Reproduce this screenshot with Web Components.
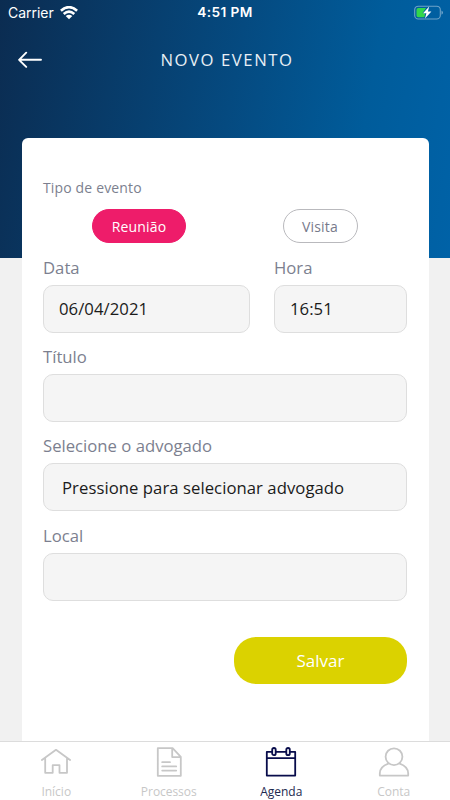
<!DOCTYPE html>
<html lang="pt-BR">
<head>
<meta charset="utf-8">
<title>Novo evento</title>
<style>
html, body { margin: 0; height: 100%; }
body { background: #f1f1f1; overflow: hidden; font-family: "Open Sans", "Noto Sans", sans-serif; }
</style>
</head>
<body>
<event-screen></event-screen>
<script>
const define = (name, html) => customElements.define(name, class extends HTMLElement {
  constructor() {
    super();
    const t = document.createElement('template');
    t.innerHTML = html;
    this.attachShadow({ mode: 'open' }).append(t.content.cloneNode(true));
  }
});

define('status-bar', `
<style>
:host { display: grid; grid-template-columns: 1fr auto 1fr; align-items: center; height: 25px; box-sizing: border-box; padding: 0 7px 0 8px; color: #fff; font: 400 14px/25px Inter, sans-serif; }
.left { display: flex; align-items: center; gap: 6px; letter-spacing: -.02px; }
.time { font-weight: 600; font-size: 13.7px; letter-spacing: .4px; margin-right: 1px; }
.battery { justify-self: end; margin-top: -1px; }
svg { display: block; }
</style>
<div class="left"><span>Carrier</span>
<svg width="18" height="14" viewBox="0 0 18 14" fill="none" stroke="#fff" stroke-width="2.6"><path d="M.9 4.7Q9-2.4 17.1 4.7M3.7 7.9Q9 3.3 14.3 7.9"/><path d="M9 13.2 5.7 10Q9 7.7 12.3 10Z" fill="#fff" stroke="none"/></svg></div>
<span class="time">4:51 PM</span>
<svg class="battery" width="29" height="15" viewBox="0 0 29 15"><rect x=".7" y="1.2" width="25.6" height="12.8" rx="3.6" fill="none" stroke="#fff" stroke-opacity=".43" stroke-width="1.1"/><path d="M27.5 5.4Q29 6.2 29 7.6T27.5 9.8Z" fill="#fff" opacity=".45"/><path d="M4.3 3H12L8.5 8.2H11.2L10.4 12.2H4.3Q2.5 12.2 2.5 10.4V4.8Q2.5 3 4.3 3Z" fill="#32d74b"/><path d="M15.2 1.4 9 8.2H12.4L11 13.6 17.4 6.6H13.9Z" fill="#fff"/></svg>`);

define('screen-header', `
<style>
:host { display: grid; grid-template-columns: 60px 1fr 60px; align-items: center; height: 69px; color: #fff; }
svg { display: block; margin-left: 18px; }
h1 { margin: 0; text-align: center; font: 400 16.7px/24px "Open Sans", sans-serif; letter-spacing: 1.55px; text-indent: 4px; white-space: nowrap; color: #e9eff5; }
</style>
<svg width="25" height="18" viewBox="0 0 25 18" fill="none" stroke="#fff" stroke-width="1.9" stroke-linecap="round" stroke-linejoin="round"><path d="M23 8.8H1.3M8.2 1.7 1.1 8.8 8.2 15.9"/></svg>
<h1><slot></slot></h1>`);

define('choice-pill', `
<style>
:host { display: flex; align-items: center; justify-content: center; box-sizing: border-box; height: 34px; width: 75px; border: 1px solid #b9b9bd; border-radius: 17px; color: #777a8b; font-size: 14px; letter-spacing: .15px; }
:host([selected]) { width: 94px; background: #ee1c6a; border-color: #ee1c6a; color: #fff; }
</style><slot></slot>`);

define('form-field', `
<style>
:host { display: block; min-width: 0; }
.label { display: block; height: 27px; line-height: 19px; font-size: 16.7px; color: #7c7f8f; white-space: nowrap; }
.box { display: flex; align-items: center; box-sizing: border-box; height: 48px; border: 1px solid #dedede; border-radius: 10px; background: #f5f5f5; padding: 0 0 0 var(--inset, 15px); font-size: 16.7px; letter-spacing: .05px; color: #1b1b1b; white-space: nowrap; }
</style>
<span class="label"><slot name="label"></slot></span><div class="box"><slot></slot></div>`);

define('save-button', `
<style>
:host { display: flex; align-items: center; justify-content: center; box-sizing: border-box; width: 173px; height: 47px; border-radius: 22px; background: #dbd200; color: #fff; font-size: 17px; }
</style><slot></slot>`);

define('tab-item', `
<style>
:host { display: flex; flex-direction: column; align-items: center; flex: 1; color: #c7c7c7; font-size: 12px; line-height: 16px; }
:host([active]) { color: #1d2a50; }
.icon { height: 37px; }
</style><div class="icon"><slot name="icon"></slot></div><span><slot></slot></span>`);

define('tab-bar', `
<style>
:host { display: flex; box-sizing: border-box; height: 59px; border-top: 1px solid #dcdcdc; background: #fff; padding-top: 5px; }
svg { display: block; fill: none; stroke: currentColor; stroke-width: 1.8; stroke-linejoin: round; stroke-linecap: round; }
</style>
<tab-item><svg slot="icon" width="32" height="32" viewBox="0 0 32 32"><path d="M1.9 13 16 2.8 30.1 13M5.2 11.2V25.8H12.7V18.2H19.5V25.8H27V11.2"/></svg>Início</tab-item>
<tab-item style="letter-spacing:-.05px"><svg slot="icon" width="32" height="32" viewBox="0 0 32 32"><path d="M4.8 1.2H19.6L27.8 9.8V28.8H4.8ZM19.2 1.5V10.1H27.5M9.2 15.2H17M9.2 19.4H23.2M9.2 23.6H23.2"/></svg>Processos</tab-item>
<tab-item active><svg slot="icon" width="32" height="32" viewBox="0 0 32 32" style="stroke:#080c4b"><path d="M7 4.9H1.8V28.6H30.2V4.9H25M11 4.9H21M1.8 11.2H30.2"/><rect x="7.2" y="1" width="3.5" height="7.2" rx="1.7"/><rect x="21.3" y="1" width="3.5" height="7.2" rx="1.7"/></svg>Agenda</tab-item>
<tab-item><svg slot="icon" width="32" height="32" viewBox="0 0 32 32"><circle cx="16" cy="9.7" r="8.4"/><path d="M10.3 16.6Q1.8 19.6 1.8 26.5V28.6H30.2V26.5Q30.2 19.6 21.7 16.6"/></svg>Conta</tab-item>`);

define('event-form', `
<style>
:host { display: flex; flex-direction: column; box-sizing: border-box; margin: 44px 21.5px 0; flex: 1; background: #fff; border-radius: 6px 6px 0 0; padding: 40px 21.5px 0; }
.type { font-size: 14px; line-height: 20px; letter-spacing: .15px; color: #7c7f8f; }
.pills { display: grid; grid-template-columns: 1fr 1fr; justify-items: center; margin: 11px -3px 14.8px 0; padding-left: 6px; column-gap: 1px; }
.row { display: grid; grid-template-columns: 207px 133px; justify-content: space-between; }
form-field { margin-bottom: 14.33px; }
save-button { align-self: flex-end; margin-top: 22px; }
</style>
<div class="type">Tipo de evento</div>
<div class="pills"><choice-pill selected>Reunião</choice-pill><choice-pill>Visita</choice-pill></div>
<div class="row"><form-field><span slot="label">Data</span>06/04/2021</form-field><form-field><span slot="label">Hora</span>16:51</form-field></div>
<form-field><span slot="label">Título</span></form-field>
<form-field style="--inset:18px"><span slot="label">Selecione o advogado</span>Pressione para selecionar advogado</form-field>
<form-field><span slot="label">Local</span></form-field>
<save-button>Salvar</save-button>`);

define('event-screen', `
<style>
:host { display: flex; flex-direction: column; width: 450px; height: 800px; background: linear-gradient(100deg, #0b2c51 0%, #054a80 50%, #005c9b 78%, #0062a7 100%) 0 0 / 100% 258px no-repeat, #f1f1f1; }
</style>
<status-bar></status-bar>
<screen-header>NOVO EVENTO</screen-header>
<event-form></event-form>
<tab-bar></tab-bar>`);
</script>
</body>
</html>
